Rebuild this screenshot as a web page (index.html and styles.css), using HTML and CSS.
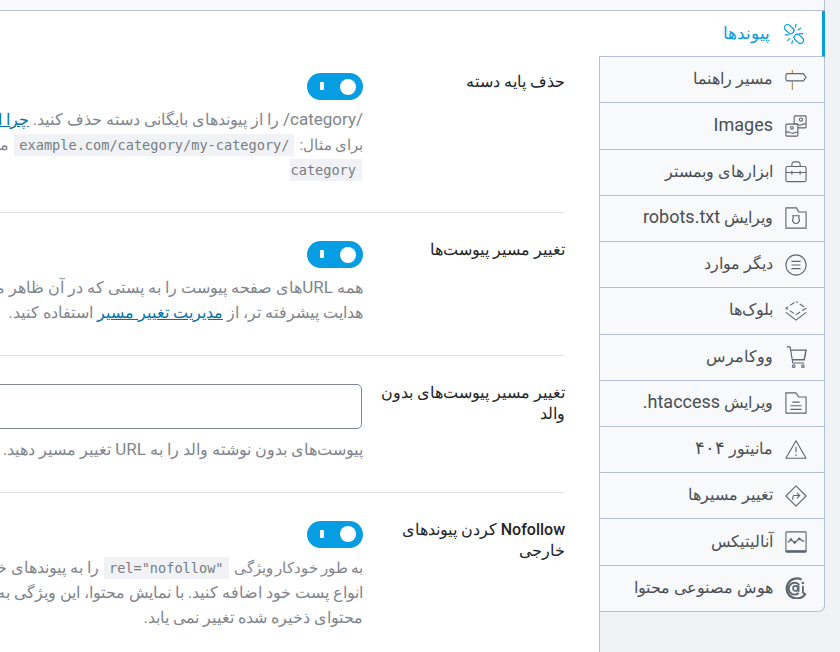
FILE: index.html
```html
<!DOCTYPE html>
<html lang="fa" dir="rtl">
<head>
<meta charset="utf-8">
<title>پیوندها</title>
<link rel="stylesheet" href="styles.css">
</head>
<body>
<div class="topbar"></div>
<div class="panel">
  <nav class="tabs">
    <a class="tab active"><svg class="ico" viewBox="0 0 24 24"><g fill="none" stroke="currentColor" stroke-width="1.3"><rect x="1" y="3.200" width="11.500" height="6.800" rx="3.400" transform="rotate(42 6.700 6.600)"/><rect x="11.500" y="14" width="11.500" height="6.800" rx="3.400" transform="rotate(42 17.300 17.400)"/><path d="M13.500 5l.8-4M16 8l3.500-2.500M17.500 11.500h4.500M2 13h4.500M4.500 19.500l3.500-3M9.500 23l1-4"/></g></svg><span>پیوندها</span></a>
    <a class="tab"><svg class="ico" viewBox="0 0 24 24"><g fill="none" stroke="currentColor" stroke-width="1.200"><path d="M2.500 5H20l3 4-3 4H2.500Q1 13 1 11.500v-5Q1 5 2.500 5z"/><path d="M8 1v4M8 13v10" stroke="#a8875f"/></g></svg><span>مسیر راهنما</span></a>
    <a class="tab"><svg class="ico" viewBox="0 0 24 24"><g fill="none" stroke="currentColor" stroke-width="1.200"><rect x="10" y="1" width="13" height="13" rx="1"/><circle cx="17.500" cy="5" r="1.800"/><path d="M10 10c3-2 5 2 7 1s3-2 6-1"/><rect class="front" x="1" y="10" width="13" height="13" rx="1"/><circle cx="7.500" cy="14" r="1.500"/><path d="M1 19c3-2 5 1 7 1s3-2 6-1"/></g></svg><span class="en">Images</span></a>
    <a class="tab"><svg class="ico" viewBox="0 0 24 24"><g fill="none" stroke="currentColor" stroke-width="1.200"><rect x="1" y="6" width="22" height="16.500" rx="2"/><path d="M7.500 6V3.500A2.500 2.500 0 0 1 10 1h4a2.500 2.500 0 0 1 2.500 2.500V6M1 12.500h22M7.500 10.500v4.500M16.500 10.500v4.500"/></g></svg><span>ابزارهای وبمستر</span></a>
    <a class="tab"><svg class="ico" viewBox="0 0 24 24"><g fill="none" stroke="currentColor" stroke-width="1.200"><path d="M1 1h11.500l2.500 4.500h8V23H1z"/><path d="M8.500 9.500h7l-.5 2c1.500 3 .5 6.500-3 6.500s-4.500-3.500-3-6.500z"/></g></svg><span>ویرایش <span class="en">robots.txt</span></span></a>
    <a class="tab"><svg class="ico" viewBox="0 0 24 24"><g fill="none" stroke="currentColor" stroke-width="1.200"><circle cx="12" cy="12" r="11"/><path d="M7 8h10M7 12h10M7 16h10"/></g></svg><span>دیگر موارد</span></a>
    <a class="tab"><svg class="ico" viewBox="0 0 24 24"><g fill="none" stroke="currentColor" stroke-width="1.200"><path d="M12 1.500L23 9l-11 7L1 9z" stroke-dasharray="5.500 2.500" stroke-dashoffset="3"/><path d="M1 13.500l11 8.500 11-8.500"/></g></svg><span>بلوک‌ها</span></a>
    <a class="tab"><svg class="ico" viewBox="0 0 24 24"><g fill="none" stroke="currentColor" stroke-width="1.200"><path d="M2 1h3.500l3 17.500H21"/><path d="M6 4.500h17l-2 10.500H8" stroke-width="1.500"/><circle cx="9.500" cy="22" r="1.400"/><circle cx="19.500" cy="22" r="1.400"/></g></svg><span>ووکامرس</span></a>
    <a class="tab"><svg class="ico" viewBox="0 0 24 24"><g fill="none" stroke="currentColor" stroke-width="1.200"><path d="M1 1h11l3 4.500h8V23H1z"/><path d="M8 11h8M6 15h12M6 19h12"/></g></svg><span>ویرایش <span class="en">htaccess.</span></span></a>
    <a class="tab"><svg class="ico" viewBox="0 0 24 24"><g fill="none" stroke="currentColor" stroke-width="1.200"><path d="M12 2L1 21h22z" stroke-linejoin="round"/><path d="M12 8.500v6M12 16.500v2"/></g></svg><span>مانیتور <span class="en">۴۰۴</span></span></a>
    <a class="tab"><svg class="ico" viewBox="0 0 24 24"><g fill="none" stroke="currentColor" stroke-width="1.200"><path d="M12 1l11 11-11 11L1 12z" stroke-linejoin="round"/><path d="M8.500 16v-2.500a2 2 0 0 1 2-2H16M13 8.500l3 3-3 3"/></g></svg><span>تغییر مسیرها</span></a>
    <a class="tab"><svg class="ico" viewBox="0 0 24 24"><g fill="none" stroke="currentColor" stroke-width="1.200"><rect x="1" y="1" width="22" height="22" rx="1"/><path d="M1 22h22" stroke-width="2.200"/><path d="M3 12.500l3.500-3 4 3 5-4 4 2.500h1.500"/><circle cx="6.500" cy="9.500" r=".9"/><circle cx="10.500" cy="12.500" r=".9"/><circle cx="15.500" cy="8.500" r=".9"/></g></svg><span>آنالیتیکس</span></a>
    <a class="tab"><svg class="ico" viewBox="0 0 24 24"><g fill="none" stroke="currentColor" stroke-width="2.500"><path d="M22.500 18A11 11 0 1 1 18 2.800"/><path d="M15.500 8.500A6.500 6.500 0 1 0 15 17.500" stroke-width="2"/><circle cx="11.500" cy="12.500" r="2.800" stroke-width="1.700"/><path d="M14.800 9v7M19.500 9.500V17l2.500 1.500" stroke-width="1.900"/></g><circle cx="19.500" cy="6.500" r="1.400" fill="currentColor"/></svg><span>هوش مصنوعی محتوا</span></a>
  </nav>
  <main class="content">
    <section class="row">
      <h3 class="label">حذف پایه دسته</h3>
      <div class="field">
        <span class="toggle"><i class="bar"></i><i class="knob"></i></span>
        <p class="desc"><span class="line"><span class="en">/category/</span> را از پیوندهای بایگانی دسته حذف کنید. <a href="#">چرا این کار را انجام دهیم؟</a></span><span class="line"><span class="tight">برای مثال:</span> <code>example.com/category/my-category/</code> میشود</span><span class="line"><code class="frag">category</code></span></p>
      </div>
    </section>
    <section class="row">
      <h3 class="label">تغییر مسیر پیوست‌ها</h3>
      <div class="field">
        <span class="toggle"><i class="bar"></i><i class="knob"></i></span>
        <p class="desc"><span class="line">همه <span class="en">URL</span>های صفحه پیوست را به پستی که در آن ظاهر می‌شوند تغییر مسیر دهید.</span><span class="line">هدایت پیشرفته تر، از <a href="#">مدیریت تغییر مسیر</a> استفاده کنید.</span></p>
      </div>
    </section>
    <section class="row">
      <h3 class="label">تغییر مسیر پیوست‌های بدون والد</h3>
      <div class="field">
        <input class="text" type="text">
        <p class="desc"><span class="line">پیوست‌های بدون نوشته والد را به <span class="en">URL</span> تغییر مسیر دهید.</span></p>
      </div>
    </section>
    <section class="row">
      <h3 class="label">Nofollow کردن پیوندهای خارجی</h3>
      <div class="field">
        <span class="toggle"><i class="bar"></i><i class="knob"></i></span>
        <p class="desc"><span class="line"><span class="tight">به طور خودکار ویژگی</span> <code>rel="nofollow"</code> را به پیوندهای خارجی موجود در</span><span class="line">انواع پست خود اضافه کنید. با نمایش محتوا، این ویژگی به صورت پویا اعمال می‌شود و</span><span class="line">محتوای ذخیره شده تغییر نمی یابد.</span></p>
      </div>
    </section>
  </main>
</div>
</body>
</html>
```
FILE: styles.css
```css
* { box-sizing: border-box; }
html, body { margin: 0; height: 652px; overflow: hidden; }
body { background: #f0f2f5; font-family: Roboto, sans-serif; color: #4a4e54; }
.topbar { height: 10px; margin-right: 15px; background: #f8f9fa; border-right: 1px solid #b5bfd9; }
.panel { display: flex; margin-right: 15px; height: 642px; border-top: 1px solid #b5bfd9; }
.tabs { flex: 0 0 225px; position: relative; z-index: 1; align-self: flex-start; background: #f8f9fa; border-right: 1px solid #b5bfd9; border-bottom-right-radius: 6px; }
.tab { display: flex; align-items: center; gap: 12px; height: 46.23px; padding-right: 17px; border-bottom: 1px solid #b5bfd9; font-size: 15.700px; }
.tab > span { margin-top: -2px; }
.tab.active { color: #069de3; background: #fff; border-right: 3px solid #069de3; margin-right: -1px; margin-left: -1px; padding-right: 17px; font-size: 17px; gap: 13px; }
.tab:last-child { border-bottom-right-radius: 6px; }
.tabs .en { font-size: 18px; line-height: 1; }
.ico { width: 22px; height: 22px; flex: none; color: #5c6570; }
.tab.active .ico { color: #069de3; }
.front { fill: #f8f9fa; }
.content { flex: none; width: 600px; height: 641px; background: #fff; border-right: 1px solid #b5bfd9; padding: 34px 34px 0 0; overflow: hidden; }
.row { display: flex; padding: 28px 0 30px; border-bottom: 1px solid #e1e3e8; }
.row:last-child { border-bottom: 0; }
.label { flex: 0 0 202px; margin: -2px 0 0; padding-left: 12px; font-size: 16px; font-weight: 500; line-height: 21px; color: #212428; }
.field { flex: none; width: 900px; }
.toggle { display: block; position: relative; width: 56px; height: 27px; border-radius: 14px; background: #069de3; }
.bar { position: absolute; left: 13px; top: 9px; width: 4px; height: 8px; background: #fff; border-radius: 1px; }
.knob { position: absolute; right: 7px; top: 5.500px; width: 16px; height: 16px; background: #fff; border-radius: 50%; }
.desc { margin: 7px 0 0; color: #7f868d; font-size: 16.200px; line-height: 25px; }
.desc .en { font-size: 17px; line-height: 1; }
.tight { font-size: 15.400px; word-spacing: -1px; }
.line { display: block; height: 25px; white-space: nowrap; }
a { color: inherit; }
.desc a { color: #0073aa; }
code { font-family: "DejaVu Sans Mono", "Liberation Mono", monospace; font-size: 13.600px; line-height: 1; background: #f0f2f5; padding: 3px 5px; margin: 0 1px; color: #777c82; direction: ltr; unicode-bidi: embed; }
code.frag { padding: 3px 6px 3px 1px; margin: 0 1px; }
.text { display: block; width: 899px; height: 45px; margin-right: 1px; margin-bottom: 7.500px; border: 1px solid #7e8993; border-radius: 5px; background: #fff; }
```
